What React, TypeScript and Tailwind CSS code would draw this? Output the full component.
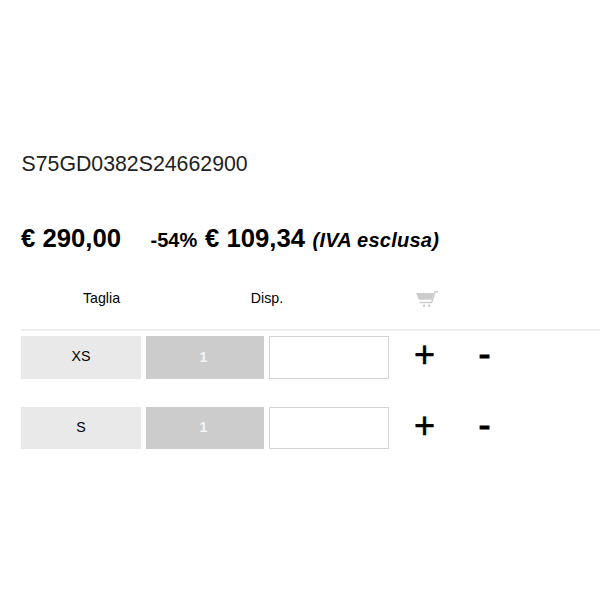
import { useState } from "react"

const sizes = [
  { key: "XS", label: "XS", available: 1 },
  { key: "S", label: "S", available: 1 },
]

function CartIcon() {
  return (
    <svg width="24" height="19" viewBox="0 0 24 19" className="block">
      <path d="M1 4h18l-2 6.800H3.800z" fill="#cccccc" />
      <path d="M23 2.700h-3l-3.300 10.800H4.500" fill="none" stroke="#cccccc" strokeWidth="1.400" />
      <circle cx="9" cy="16.800" r="1.200" fill="#cccccc" />
      <circle cx="14" cy="16.800" r="1.200" fill="#cccccc" />
    </svg>
  )
}

function SizeRow({ label, available, tall }: { label: string; available: number; tall: boolean }) {
  const [quantity, setQuantity] = useState(0)

  return (
    <div className={tall ? "flex h-[43px]" : "flex h-[42px]"}>
      <div className="flex w-[120px] items-center justify-center bg-[#e9e9e9] pb-px text-[14.2px] text-black">
        {label}
      </div>
      <div className="ml-[5px] flex w-[118px] items-center justify-center bg-[#cccccc] pr-[3px] text-[14.2px] font-bold text-[#f4f4f4]">
        {available}
      </div>
      <input
        className="ml-[5px] w-[120px] border border-[#d3d3d3] bg-white text-center text-[14.2px] outline-none"
        value={quantity || ""}
        onChange={(e) => setQuantity(Math.min(available, Number(e.target.value) || 0))}
      />
      <button
        className="ml-[25px] flex h-[38px] w-[21px] items-center justify-center text-[36px] leading-none [-webkit-text-stroke:0.6px_black]"
        onClick={() => setQuantity(Math.min(available, quantity + 1))}
      >
        +
      </button>
      <button
        className="ml-[39px] flex h-[36px] w-[21px] items-center justify-center text-[36px] leading-none [-webkit-text-stroke:1px_black]"
        onClick={() => setQuantity(Math.max(0, quantity - 1))}
      >
        -
      </button>
    </div>
  )
}

export default function App() {
  return (
    <div className="h-[600px] w-[600px] overflow-hidden bg-white pt-[152px] pl-[21px] font-['Liberation_Sans',Arial,sans-serif] text-black">
      <h1 className="h-[24px] pl-[0.5px] text-[21.3px] leading-[24px] text-[#222222]">S75GD0382S24662900</h1>

      <div className="mt-[45px] flex h-[32px] items-baseline font-bold leading-[34px] whitespace-nowrap">
        <span className="w-[129.500px] text-[25.700px]">€ 290,00</span>
        <span className="w-[54.500px] text-[20px]">-54%</span>
        <span className="w-[107.500px] text-[25.700px]">€ 109,34</span>
        <span className="text-[20px] tracking-[0.250px] italic">(IVA esclusa)</span>
      </div>

      <div className="mt-[27px] flex h-[51px] border-b-2 border-[#eeeeee] text-[14.2px] leading-[36px]">
        <div className="w-[161px] text-center">Taglia</div>
        <div className="w-[170px] text-center">Disp.</div>
        <div className="ml-[63px] pt-[9px]">
          <CartIcon />
        </div>
      </div>

      <div className="mt-[5px] flex flex-col gap-[28px]">
        {sizes.map((size, index) => (
          <SizeRow key={size.key} label={size.label} available={size.available} tall={index === 0} />
        ))}
      </div>
    </div>
  )
}
